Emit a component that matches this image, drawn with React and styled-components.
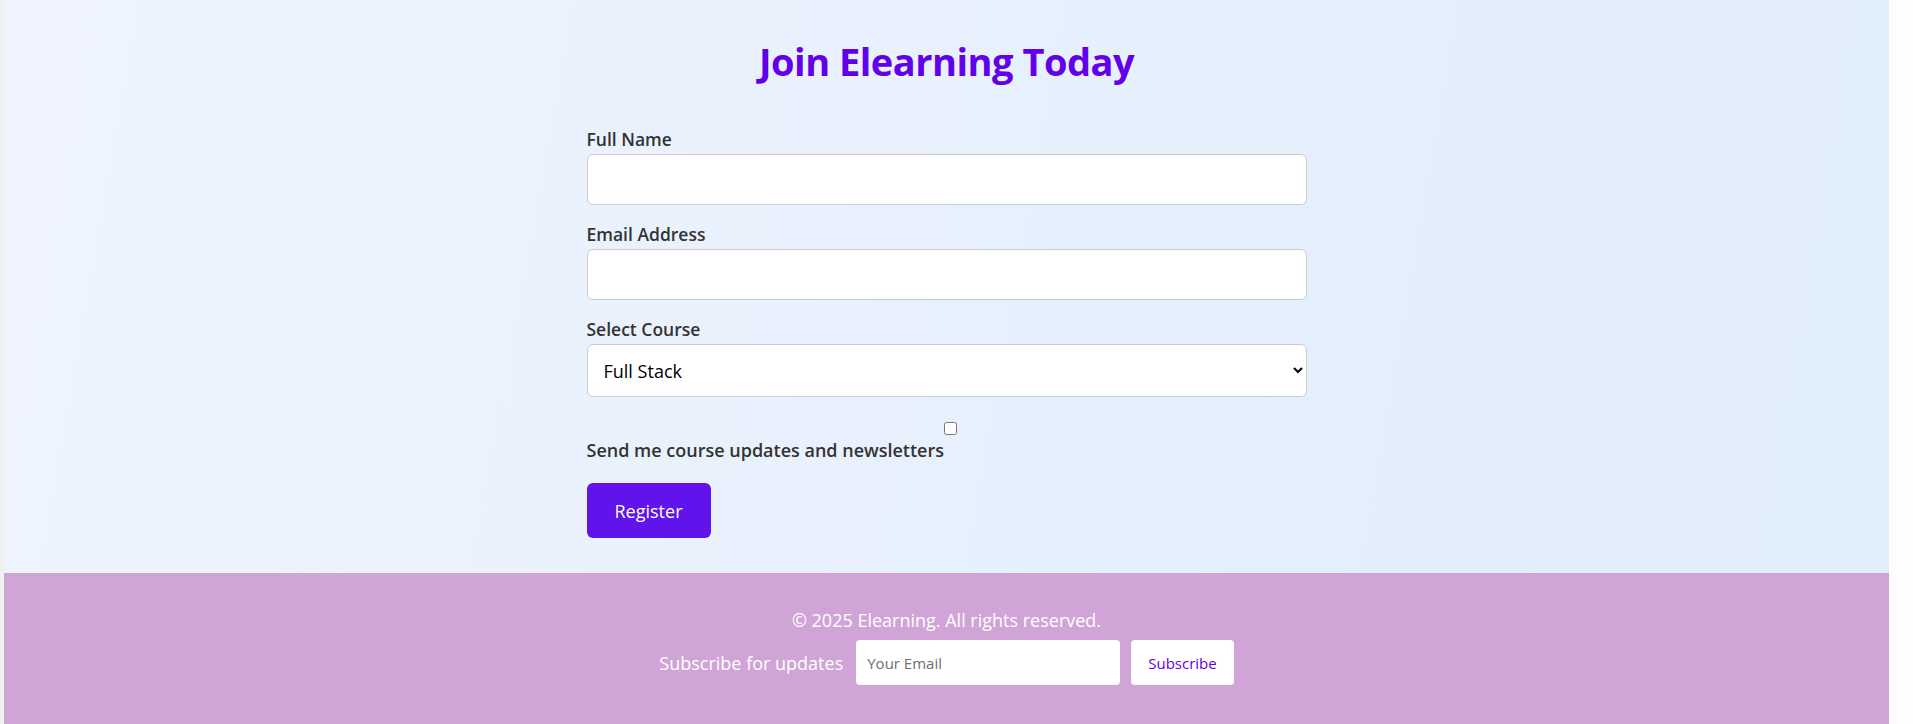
import React from 'react';
import styled, { createGlobalStyle } from 'styled-components';

const GlobalStyle = createGlobalStyle`
  html {
    background: linear-gradient(90deg, #f1f1f1 0 50%, #fdfdfd 50% 100%);
  }
  body {
    margin: 0 24px 0 4px;
    font-family: "Open Sans", "Noto Sans", "Liberation Sans", sans-serif;
  }
  * {
    box-sizing: border-box;
  }
`;

const Page = styled.div`
  display: flex;
  flex-direction: column;
  min-height: 100vh;
`;

const RegisterSection = styled.section`
  background: linear-gradient(100deg, #eff4ff 0%, #e0edfb 100%);
  padding: 37px 20px 35px;
`;

const Title = styled.h2`
  margin: 0 0 42px;
  text-align: center;
  color: #6200ea;
  font-size: 38px;
  font-weight: 700;
  line-height: 48px;
  letter-spacing: -0.5px;
`;

const Form = styled.form`
  max-width: 720px;
  margin: 0 auto;
  display: flex;
  flex-direction: column;
`;

const FormGroup = styled.div`
  display: flex;
  flex-direction: column;
  margin-bottom: ${p => (p.last ? '22px' : '17px')};
`;

const Label = styled.label`
  display: block;
  margin-bottom: 3px;
  color: #333;
  font-size: 17.5px;
  font-weight: 600;
  line-height: 24px;
`;

const TextInput = styled.input`
  width: 100%;
  height: 51px;
  padding: 0 15px;
  border: 1px solid #ccc;
  border-radius: 6px;
  background: #fff;
  font-family: inherit;
  font-size: 18px;
`;

const Select = styled.select`
  width: 100%;
  height: 53px;
  padding: 0 12px;
  border: 1px solid #ccc;
  border-radius: 6px;
  background: #fff;
  color: #000;
  font-family: inherit;
  font-size: 18px;
`;

const CheckboxRow = styled.div`
  display: flex;
  align-items: flex-start;
  margin-bottom: 21px;
`;

const CheckboxLabel = styled.label`
  margin-top: 19px;
  color: #333;
  font-size: 18px;
  font-weight: 600;
  line-height: 24px;
`;

const Checkbox = styled.input`
  width: 13px;
  height: 13px;
  margin: 3px 0 0 0;
`;

const RegisterButton = styled.button`
  align-self: flex-start;
  height: 55px;
  padding: 0 28px;
  border: none;
  border-radius: 6px;
  background: #6013ea;
  color: #fff;
  font-family: inherit;
  font-size: 18px;
  cursor: pointer;
`;

const Footer = styled.footer`
  flex: 1;
  background: #d1a4d8;
  color: #fff;
  text-align: center;
  padding: 36px 20px 36px;
`;

const Copyright = styled.p`
  margin: 0 0 9px;
  font-size: 18px;
  line-height: 22px;
`;

const SubscribeRow = styled.div`
  display: flex;
  justify-content: center;
  align-items: center;
  gap: 11px;
`;

const SubscribeText = styled.span`
  margin-right: 2px;
  font-size: 18px;
`;

const EmailInput = styled.input`
  width: 264px;
  height: 45px;
  padding: 0 11px;
  border: none;
  border-radius: 4px;
  background: #fff;
  font-family: inherit;
  font-size: 15px;

  &::placeholder {
    color: #6f6f6f;
  }
`;

const SubscribeButton = styled.button`
  height: 45px;
  padding: 0 17px;
  border: none;
  border-radius: 4px;
  background: #fff;
  color: #6200ea;
  font-family: inherit;
  font-size: 15px;
  cursor: pointer;
`;

export default function App() {
  return (
    <Page>
      <GlobalStyle />
      <RegisterSection>
        <Title>Join Elearning Today</Title>
        <Form onSubmit={e => e.preventDefault()}>
          <FormGroup>
            <Label htmlFor="name">Full Name</Label>
            <TextInput id="name" type="text" />
          </FormGroup>
          <FormGroup>
            <Label htmlFor="email">Email Address</Label>
            <TextInput id="email" type="email" />
          </FormGroup>
          <FormGroup last>
            <Label htmlFor="course">Select Course</Label>
            <Select id="course" defaultValue="fullstack">
              <option value="fullstack">Full Stack</option>
              <option value="frontend">Frontend</option>
              <option value="backend">Backend</option>
            </Select>
          </FormGroup>
          <CheckboxRow>
            <CheckboxLabel htmlFor="news">Send me course updates and newsletters</CheckboxLabel>
            <Checkbox id="news" type="checkbox" />
          </CheckboxRow>
          <RegisterButton type="submit">Register</RegisterButton>
        </Form>
      </RegisterSection>
      <Footer>
        <Copyright>© 2025 Elearning. All rights reserved.</Copyright>
        <SubscribeRow>
          <SubscribeText>Subscribe for updates</SubscribeText>
          <EmailInput type="email" placeholder="Your Email" />
          <SubscribeButton type="button">Subscribe</SubscribeButton>
        </SubscribeRow>
      </Footer>
    </Page>
  );
}
